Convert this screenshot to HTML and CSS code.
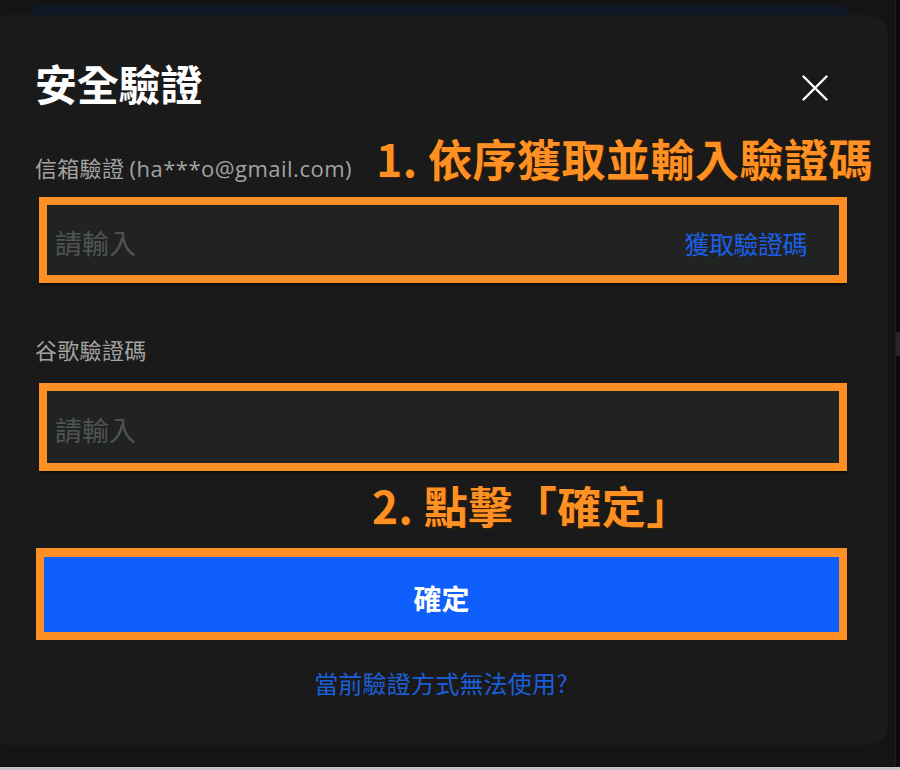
FILE: index.html
```html
<!DOCTYPE html>
<html lang="zh-Hant">
<head>
<meta charset="utf-8">
<title>安全驗證</title>
<link rel="stylesheet" href="styles.css">
</head>
<body>
<div class="screen">
  <div class="page">
    <div class="main">
      <div class="behind"></div>
      <div class="modal">
        <div class="modal-head">
          <h1 class="title">安全驗證</h1>
          <button class="close" aria-label="close">
            <svg width="26" height="26" viewBox="0 0 26 26"><path d="M1.5 1.5 L24.5 24.5 M24.5 1.5 L1.5 24.5" stroke="#ffffff" stroke-width="2.4" stroke-linecap="round" fill="none"/></svg>
          </button>
        </div>
        <div class="row1">
          <span class="label">信箱驗證 <span class="latin">(ha***o@gmail.com)</span></span>
          <span class="note note1">1. 依序獲取並輸入驗證碼</span>
        </div>
        <div class="field field1">
          <input class="field-input" type="text" placeholder="請輸入">
          <span class="get-code">獲取驗證碼</span>
        </div>
        <div class="label label2">谷歌驗證碼</div>
        <div class="field field2">
          <input class="field-input" type="text" placeholder="請輸入">
        </div>
        <div class="note note2">2. 點擊「確定」</div>
        <div class="confirm-wrap">
          <button class="confirm">確定</button>
        </div>
        <div class="alt-link">當前驗證方式無法使用?</div>
      </div>
    </div>
    <div class="rail"><div class="thumb"></div></div>
  </div>
  <div class="baseline"></div>
</div>
</body>
</html>
```
FILE: styles.css
```css
* { box-sizing: border-box; }
html, body { margin: 0; padding: 0; }
body {
  width: 900px;
  height: 770px;
  overflow: hidden;
  background: #131313;
  font-family: "Noto Sans", "Noto Sans CJK TC", sans-serif;
}
.screen {
  display: flex;
  flex-direction: column;
  height: 770px;
}
.page {
  flex: 1;
  display: flex;
  overflow: hidden;
}
.main {
  width: 895px;
  background: #141414;
}
.rail {
  width: 5px;
  background: #0b0b0b;
  border-left: 1px solid #1d1d1d;
  padding-top: 332px;
}
.thumb {
  height: 24px;
  background: #262626;
}
.baseline {
  height: 3px;
  background: #c4c4c4;
}
.behind {
  margin: 5px 46px 0 30px;
  height: 20px;
  background: #101828;
  border-radius: 12px 12px 0 0;
}
.modal {
  margin-top: -10px;
  margin-left: -10px;
  width: 898px;
  height: 730px;
  background: #1a1a1a;
  border-radius: 20px;
  padding: 0 41px 0 45px;
  display: flex;
  flex-direction: column;
}
.modal-head {
  margin-top: 44px;
  height: 48px;
  display: flex;
  align-items: center;
  justify-content: space-between;
}
.title {
  margin: 0;
  font-family: "Noto Sans CJK TC", sans-serif;
  font-size: 42px;
  line-height: 48px;
  font-weight: 700;
  color: #ffffff;
  letter-spacing: -0.2px;
}
.close {
  margin-right: 19px;
  margin-top: 10px;
  padding: 0;
  width: 26px;
  height: 26px;
  border: none;
  background: transparent;
  display: flex;
}
.row1 {
  margin-top: 25px;
  display: flex;
  align-items: baseline;
  justify-content: space-between;
  margin-right: -26px;
}
.label {
  font-family: "Noto Sans CJK TC", sans-serif;
  font-size: 22px;
  line-height: 30px;
  color: #a3a3a3;
  letter-spacing: 0.3px;
}
.latin {
  font-family: "Open Sans", "Noto Sans", sans-serif;
  letter-spacing: 0.5px;
}
.note {
  font-family: "Noto Sans CJK TC", sans-serif;
  font-weight: 700;
  font-size: 44px;
  line-height: 52px;
  color: #ff9124;
  letter-spacing: 0.5px;
  text-shadow: 1px 1px 0 #3d2100, -1px 0 0 #2b1800;
}
.field {
  margin-left: 4px;
  border: 8px solid #fd8f25;
  background: #212323;
  display: flex;
  align-items: center;
  padding: 0 32px 0 8px;
  box-shadow: 0 2px 2px rgba(0, 0, 0, 0.5);
}
.field1 {
  margin-top: 13px;
  height: 86px;
}
.field2 {
  margin-top: 19px;
  height: 88px;
}
.field-input {
  flex: 1;
  min-width: 0;
  border: none;
  outline: none;
  background: transparent;
  font-family: "Noto Sans CJK TC", sans-serif;
  font-size: 27px;
  color: #cccccc;
  padding: 0;
  margin-top: 4px;
}
.field-input::placeholder {
  color: #505353;
}
.get-code {
  font-family: "Noto Sans CJK TC", sans-serif;
  font-size: 25px;
  color: #1b5fe6;
  letter-spacing: -0.5px;
  margin-top: 6px;
}
.label2 {
  margin-top: 51px;
}
.note2 {
  margin-top: 8px;
  margin-left: 337px;
}
.confirm-wrap {
  margin-top: 17px;
  margin-left: 1px;
  height: 92px;
  border: 8px solid #fd8f25;
  border-top-width: 9px;
  background: #0f5fff;
  display: flex;
}
.confirm {
  flex: 1;
  border: none;
  background: #0f5fff;
  color: #ffffff;
  font-family: "Noto Sans CJK TC", sans-serif;
  font-weight: 700;
  font-size: 28px;
  padding: 6px 0 0 0;
}
.alt-link {
  margin-top: 26px;
  text-align: center;
  font-family: "Noto Sans CJK TC", sans-serif;
  font-size: 24px;
  line-height: 34px;
  color: #1b5fd8;
  letter-spacing: 0.2px;
}
```
